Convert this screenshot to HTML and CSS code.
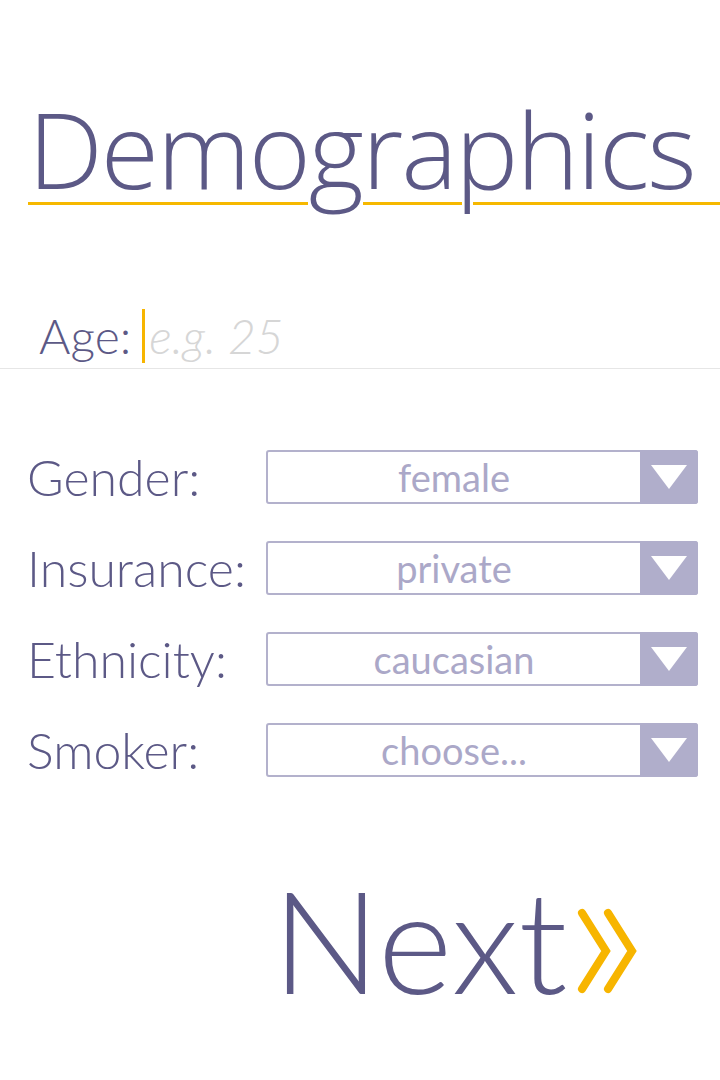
FILE: index.html
```html
<!DOCTYPE html>
<html>
<head>
<meta charset="utf-8">
<link rel="stylesheet" href="styles.css">
</head>
<body>
<div class="page">
  <h1 class="title"><span class="title-text">Demographics&nbsp;</span></h1>
  <div class="age-row">
    <span class="age-label">Age:</span>
    <span class="caret"></span>
    <span class="placeholder">e.g. 25</span>
  </div>
  <div class="form">
    <div class="row">
      <span class="label">Gender:</span>
      <div class="select"><span class="value">female</span><span class="arrow"><svg width="36" height="24" viewBox="0 0 36 24"><polygon points="0,0 36,0 18,24" fill="#fff"/></svg></span></div>
    </div>
    <div class="row">
      <span class="label">Insurance:</span>
      <div class="select"><span class="value">private</span><span class="arrow"><svg width="36" height="24" viewBox="0 0 36 24"><polygon points="0,0 36,0 18,24" fill="#fff"/></svg></span></div>
    </div>
    <div class="row">
      <span class="label">Ethnicity:</span>
      <div class="select"><span class="value">caucasian</span><span class="arrow"><svg width="36" height="24" viewBox="0 0 36 24"><polygon points="0,0 36,0 18,24" fill="#fff"/></svg></span></div>
    </div>
    <div class="row">
      <span class="label">Smoker:</span>
      <div class="select"><span class="value">choose...</span><span class="arrow"><svg width="36" height="24" viewBox="0 0 36 24"><polygon points="0,0 36,0 18,24" fill="#fff"/></svg></span></div>
    </div>
  </div>
  <div class="next">
    <span class="next-text">Next</span>
    <svg class="chev" width="66" height="92" viewBox="0 0 66 92"><path d="M8 7 L32 45 L8 83 M34 7 L58 45 L34 83" fill="none" stroke="#f7b500" stroke-width="8" stroke-linecap="round" stroke-linejoin="miter"/></svg>
  </div>
</div>
</body>
</html>
```

FILE: styles.css
```css
html, body {
  margin: 0;
  padding: 0;
  background: #fff;
}
body {
  font-family: Lato, "Open Sans", sans-serif;
  color: #5c5986;
}
.page {
  width: 720px;
  height: 1080px;
  overflow: hidden;
  display: flex;
  flex-direction: column;
}
.title {
  margin: 90px 0 0 0;
  padding-left: 28px;
  font-family: "Open Sans", sans-serif;
  font-weight: 300;
  font-size: 106px;
  line-height: 116px;
  letter-spacing: -2px;
  white-space: nowrap;
}
.title-text {
  text-decoration: underline;
  text-decoration-color: #f6b800;
  text-decoration-thickness: 3px;
  text-underline-offset: 13px;
  text-decoration-skip-ink: auto;
}
.age-row {
  margin-top: 98px;
  display: flex;
  align-items: center;
  padding-left: 39px;
  height: 64px;
  border-bottom: 1px solid #e6e6e6;
}
.age-label {
  font-weight: 300;
  font-size: 48px;
  line-height: 56px;
}
.caret {
  width: 3px;
  height: 54px;
  background: #f7b500;
  margin-left: 11px;
}
.placeholder {
  margin-left: 4px;
  font-weight: 300;
  font-style: italic;
  font-size: 48px;
  line-height: 56px;
  color: #d6d6d6;
}
.form {
  margin-top: 81px;
  display: flex;
  flex-direction: column;
  gap: 37px;
  padding-left: 27px;
}
.row {
  display: flex;
  align-items: center;
  height: 54px;
}
.label {
  width: 239px;
  font-weight: 300;
  font-size: 50px;
  line-height: 54px;
}
.select {
  width: 432px;
  height: 54px;
  box-sizing: border-box;
  border: 2px solid #b3b1cc;
  border-radius: 3px;
  display: flex;
  align-items: stretch;
}
.value {
  flex: 1;
  text-align: center;
  font-size: 38px;
  line-height: 50px;
  color: #aba8c8;
}
.arrow {
  width: 58px;
  background: #b0aecb;
  display: flex;
  align-items: center;
  justify-content: center;
  margin: -2px -2px -2px 0;
  border-radius: 0 3px 3px 0;
}
.arrow svg {
  display: block;
}
.next {
  margin-top: 90px;
  display: flex;
  align-items: flex-start;
  padding-left: 272px;
}
.next-text {
  font-weight: 300;
  font-size: 143px;
  line-height: 143px;
}
.chev {
  margin-top: 39px;
  margin-left: 6px;
}
```
